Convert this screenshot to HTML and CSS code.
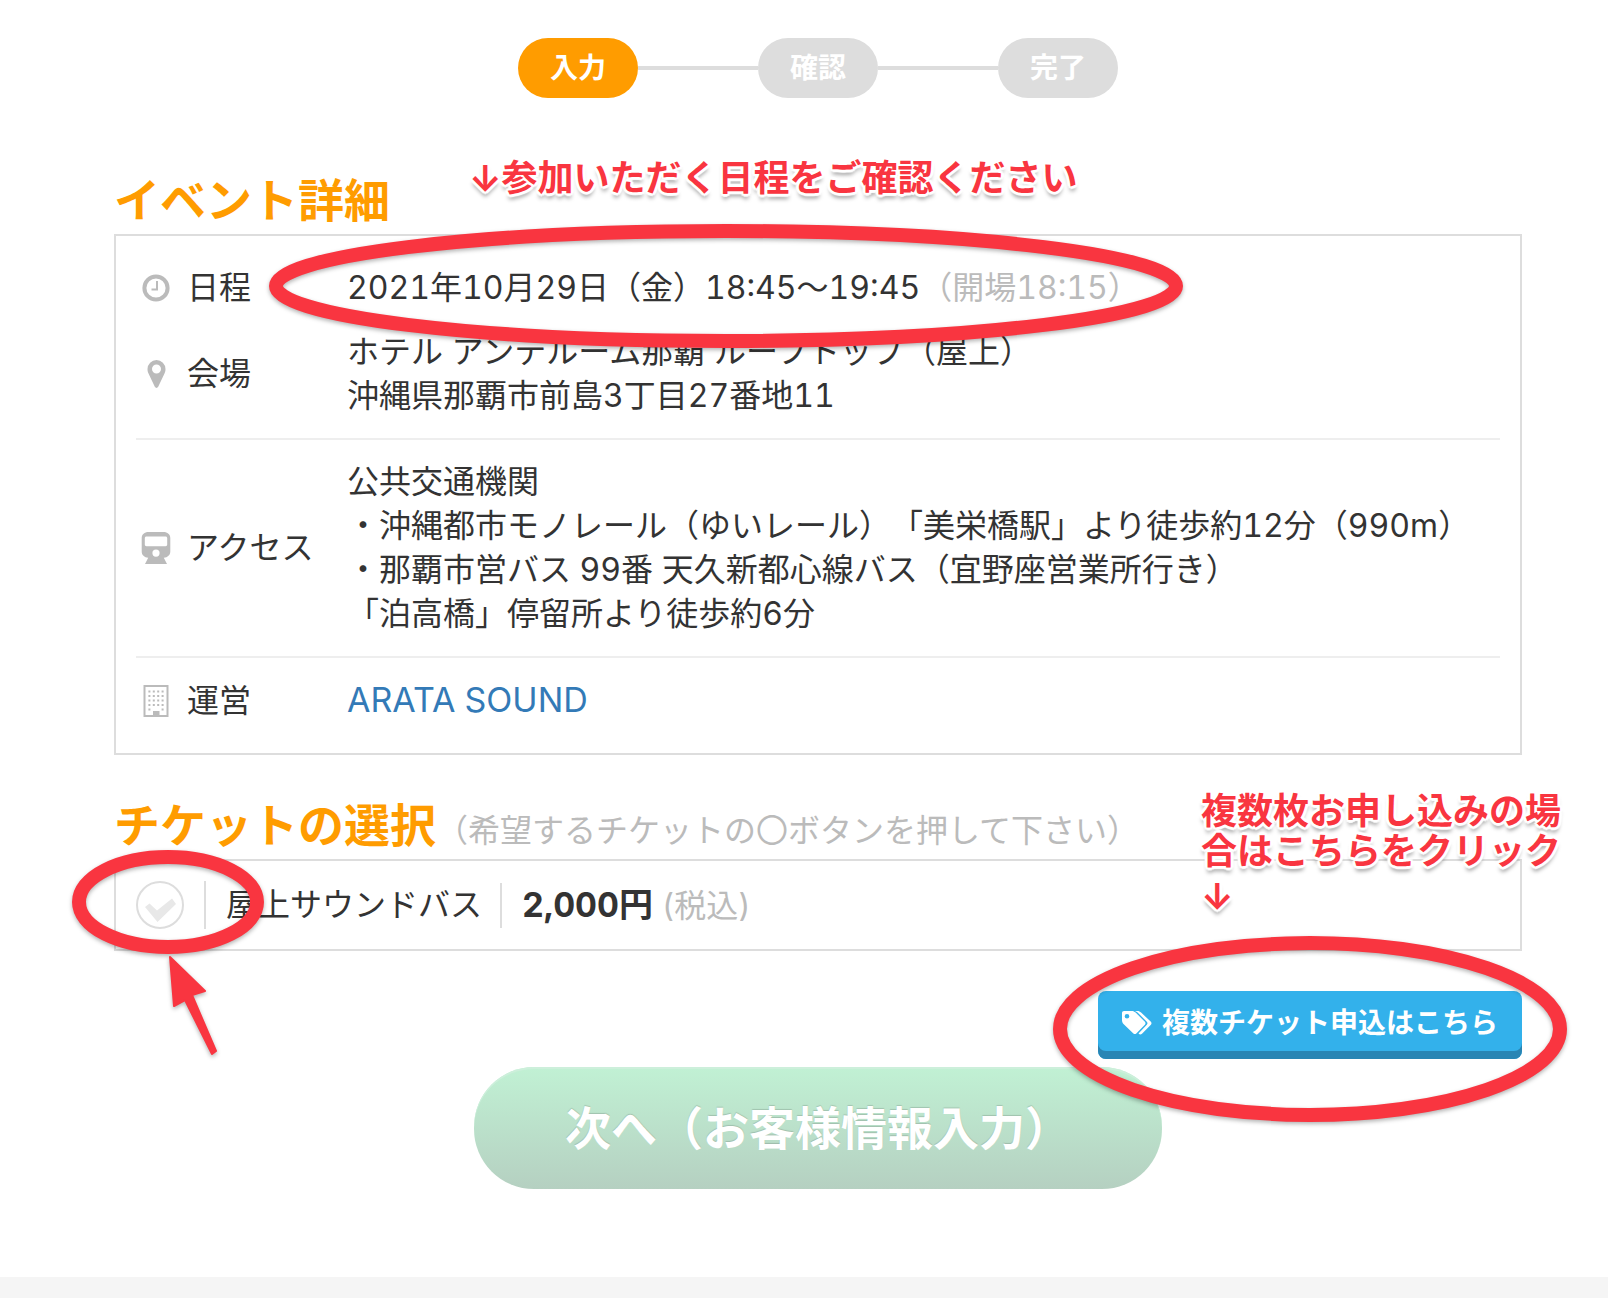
FILE: index.html
```html
<!DOCTYPE html>
<html lang="ja">
<head>
  <meta charset="UTF-8" />
  <meta name="viewport" content="width=device-width, initial-scale=1" />
  <title>イベント申込</title>
  <link rel="stylesheet" href="styles.css">
</head>
<body>

  <main class="page">
    <ol class="steps">
      <li class="step active">入力</li>
      <li class="step">確認</li>
      <li class="step">完了</li>
    </ol>

    <section class="section">
      <h2 class="title">イベント詳細</h2>
      <p class="note note-date"><span class="down">↓</span>参加いただく日程をご確認ください</p>

      <div class="box">
        <table class="detail">
          <tr class="row-date">
            <th scope="row">
              <div class="label">
                <svg class="icon" width="40" height="32" viewBox="0 0 40 32">
                  <circle cx="20" cy="16" r="11.6" fill="none" stroke="#bbb" stroke-width="4" />
                  <path d="M21 9v8.500h-5.500" fill="none" stroke="#bbb" stroke-width="2" />
                </svg>
                日程
              </div>
            </th>
            <td>
              2021年10月29日（金）18:45〜19:45<span class="muted">（開場18:15）</span>
              <svg class="mark mark-date" width="926" height="140" viewBox="0 0 926 140">
                <ellipse cx="463" cy="68" rx="450" ry="55" />
              </svg>
            </td>
          </tr>
          <tr>
            <th scope="row">
              <div class="label">
                <svg class="icon" width="40" height="32" viewBox="0 0 40 32">
                  <path fill="#bbb" fill-rule="evenodd" d="M20.500 2a9 9 0 0 1 9 9c0 2-.4 3.300-1 4.500l-6.300 13.300c-.7 1.500-2.700 1.500-3.400 0L12.500 15.500c-.6-1.200-1-2.500-1-4.500a9 9 0 0 1 9-9zm0 4.500a4.500 4.500 0 1 0 0 9 4.500 4.500 0 0 0 0-9z" />
                </svg>
                会場
              </div>
            </th>
            <td>ホテル アンテルーム那覇 ルーフトップ（屋上）<br>沖縄県那覇市前島3丁目27番地11</td>
          </tr>
          <tr>
            <th scope="row">
              <div class="label">
                <svg class="icon" width="40" height="32" viewBox="0 0 40 32">
                  <path fill="#bbb" fill-rule="evenodd" d="M12.500 0h15c4 0 6.800 2.500 6.800 6v13.500c0 3.500-2.700 6-6.500 6.200l3.200 6.300H9l3.200-6.300c-3.800-.2-6.500-2.700-6.500-6.200V6c0-3.500 2.800-6 6.800-6zM10.500 4.500c-1 0-1.700.7-1.700 1.700v6.300c0 1 .7 1.700 1.700 1.700h19c1 0 1.700-.7 1.700-1.700V6.200c0-1-.7-1.700-1.700-1.700zM20 17.500a3.600 3.600 0 1 0 0 7.200 3.600 3.600 0 0 0 0-7.200z" />
                </svg>
                アクセス
              </div>
            </th>
            <td>公共交通機関<br>・沖縄都市モノレール（ゆいレール）「美栄橋駅」より徒歩約12分（990m）<br>・那覇市営バス 99番 天久新都心線バス（宜野座営業所行き）<br>「泊高橋」停留所より徒歩約6分</td>
          </tr>
          <tr>
            <th scope="row">
              <div class="label">
                <svg class="icon" width="40" height="32" viewBox="0 0 40 32">
                  <rect x="8.500" y="1" width="23" height="30" fill="none" stroke="#bbb" stroke-width="2" />
                  <g stroke="#bbb" stroke-width="2" stroke-dasharray="2 2.400">
                    <path d="M12.400 6.500h16M12.400 11h16M12.400 15.500h16M12.400 20h16" />
                  </g>
                  <path fill="#bbb" d="M12.400 23.500h2v2h-2zM25.600 23.500h2v2h-2zM17 26h6.500v5H17z" />
                </svg>
                運営
              </div>
            </th>
            <td><a class="link" href="#">ARATA SOUND</a></td>
          </tr>
        </table>
      </div>
    </section>

    <section class="section">
      <h2 class="title">チケットの選択<small class="muted">（希望するチケットの〇ボタンを押して下さい）</small></h2>
      <p class="note note-multi">複数枚お申し込みの場<br>合はこちらをクリック<span class="down">↓</span></p>

      <div class="box ticket">
        <label class="check">
          <input class="check-input" type="radio" name="ticket" aria-label="屋上サウンドバス">
          <svg class="check-mark" width="48" height="48" viewBox="0 0 48 48">
            <path d="M9 26l4.500-3.500 7.500 7 15-12 4 5.500-18.500 18z" />
          </svg>
        </label>
        <span class="ticket-name">屋上サウンドバス</span>
        <span class="ticket-price"><strong>2,000円</strong> <span class="muted">(税込)</span></span>
        <svg class="mark mark-check" width="220" height="230" viewBox="0 0 220 230">
          <ellipse cx="108" cy="63" rx="89" ry="45" />
          <path d="M110 118l35 34-13 4 24 56-4 3-27-54-11 6z" />
        </svg>
      </div>
    </section>

    <div class="multi">
      <button class="multi-btn" type="button">
        <svg width="30" height="24" viewBox="0 0 30 24" fill="#fff">
          <path fill-rule="evenodd" d="M2 0h8c1.300 0 2.600.6 3.600 1.500l9.300 9.300c.8.900.8 2 0 2.900l-8.600 8.800c-.9.800-2 .8-2.900 0L1.500 13C.6 12 0 10.600 0 9.300V2C0 .8.800 0 2 0zm3 3a2.300 2.300 0 1 0 0 4.600A2.300 2.300 0 0 0 5 3z" />
          <path d="M13 0h2.500c1.300 0 2.600.6 3.600 1.500l9.800 9.300c.8.900.8 2 0 2.900L20 22.700c-1.200 1.100-2.300 1-3.500-.3l8.300-8.700c.9-.9.900-2 0-2.900l-9.200-9.300C15 .9 14 .3 13 0z" />
        </svg>
        複数チケット申込はこちら
      </button>
      <svg class="mark mark-multi" width="530" height="204" viewBox="0 0 530 204">
        <ellipse cx="265" cy="100" rx="250" ry="86" />
      </svg>
    </div>

    <button class="next-btn" type="submit">次へ（お客様情報入力）</button>
  </main>

  <footer class="footer"></footer>

</body>
</html>
```

FILE: styles.css
```css
* {
  box-sizing: border-box;
}
body {
  margin: 0;
  min-height: 100vh;
  display: flex;
  flex-direction: column;
  background: #fff;
  color: #333;
  font-family: Inter, "Noto Sans CJK JP", sans-serif;
  font-size: 32px;
  line-height: 44px;
  font-variant-numeric: tabular-nums;
  text-spacing-trim: space-all;
}
button {
  font-family: inherit;
  border: none;
  cursor: pointer;
}
.page {
  padding: 38px 86px 88px 114px;
}
.muted {
  color: #bbb;
  font-weight: 400;
}

/* steps */
.steps {
  display: flex;
  justify-content: center;
  list-style: none;
  margin: 0 0 78px;
  padding: 0;
}
.step {
  display: flex;
  align-items: center;
  justify-content: center;
  width: 120px;
  height: 60px;
  border-radius: 30px;
  background: #ddd;
  color: #fff;
  font-size: 28px;
  font-weight: 700;
}
.step.active {
  background: #ff9c00;
}
.step + .step {
  margin-left: 120px;
  position: relative;
}
.step + .step::before {
  content: "";
  position: absolute;
  right: 100%;
  width: 120px;
  height: 4px;
  background: #ddd;
}

/* sections */
.section {
  position: relative;
}
.section + .section {
  margin-top: 46px;
}
.title {
  margin: 0 0 10px;
  color: #ff9c00;
  font-size: 46px;
  line-height: 48px;
  font-weight: 700;
}
.title small {
  font-size: 32px;
  line-height: 32px;
}
.box {
  padding: 10px 20px;
  border: 2px solid #ddd;
}

/* event detail */
.detail {
  width: 100%;
  border-collapse: collapse;
}
.detail th,
.detail td {
  padding: 20px 0;
  border-bottom: 2px solid #eee;
  text-align: left;
  font-weight: 400;
}
.detail th {
  width: 211px;
}
.detail .row-date th,
.detail .row-date td {
  padding-bottom: 0;
  border-bottom: none;
}
.detail tr:last-child th,
.detail tr:last-child td {
  border-bottom: none;
}
.detail td {
  position: relative;
}
.label {
  display: flex;
  align-items: center;
  gap: 11px;
}
.icon {
  flex: none;
}
.link {
  color: #337ab7;
  font-size: 34px;
  text-decoration: none;
}

/* ticket */
.ticket {
  display: flex;
  align-items: center;
  padding: 20px;
  position: relative;
}
.check {
  display: grid;
  padding-right: 20px;
  border-right: 2px solid #ddd;
  cursor: pointer;
}
.check-input,
.check-mark {
  grid-area: 1 / 1;
}
.check-input {
  appearance: none;
  width: 48px;
  height: 48px;
  margin: 0;
  border: 2px solid #ddd;
  border-radius: 50%;
}
.check-mark {
  fill: #e8e8e8;
  pointer-events: none;
}
.check-input:checked + .check-mark {
  fill: #ff9c00;
}
.ticket-name {
  padding: 0 18px 0 20px;
}
.ticket-price {
  padding-left: 20px;
  border-left: 2px solid #ddd;
}
.ticket-price strong {
  font-size: 34px;
}

/* buttons */
.multi {
  position: relative;
  z-index: 1;
  width: fit-content;
  margin: 40px 0 8px auto;
}
.multi-btn {
  display: flex;
  align-items: center;
  gap: 10px;
  padding: 10px 24px 14px;
  border-radius: 8px;
  background: #33b1eb;
  box-shadow: inset 0 -8px #2885b4;
  color: #fff;
  font-size: 28px;
  line-height: 44px;
  font-weight: 700;
}
.next-btn {
  display: block;
  margin: 0 auto;
  padding: 32px 91px;
  border-radius: 60px;
  background: linear-gradient(#c1f1d4, #b5d0c1);
  box-shadow: inset 0 2px #cdefdb;
  color: #fff;
  font-size: 46px;
  line-height: 58px;
  font-weight: 700;
  text-shadow: 0 -1px 1px rgba(0, 0, 0, 0.15);
}
.footer {
  flex: 1;
  min-height: 22px;
  background: #f5f5f5;
}

/* red notes and marks */
.note {
  position: absolute;
  z-index: 2;
  margin: 0;
  color: #f93540;
  font-size: 36px;
  line-height: 40px;
  font-weight: 700;
  white-space: nowrap;
  text-shadow:
    3px 0 1px #fff, -3px 0 1px #fff, 0 3px 1px #fff, 0 -3px 1px #fff,
    2px 2px 1px #fff, -2px 2px 1px #fff, 2px -2px 1px #fff, -2px -2px 1px #fff,
    0 5px 4px rgba(0, 0, 0, 0.4);
}
.note-date {
  top: -18px;
  left: 355px;
}
.note-multi {
  top: -10px;
  right: -39px;
}
.note-multi .down {
  display: block;
  line-height: 50px;
}
.mark {
  position: absolute;
  z-index: 1;
  fill: none;
  stroke: #f93540;
  stroke-width: 14;
  pointer-events: none;
  filter: drop-shadow(0 2px 2px rgba(0, 0, 0, 0.3));
}
.mark path {
  fill: #f93540;
  stroke-width: 2;
  stroke-linejoin: round;
}
.mark-date {
  top: -28px;
  left: -84px;
}
.mark-check {
  top: -22px;
  left: -56px;
}
.mark-multi {
  top: -62px;
  right: -53px;
}
```
